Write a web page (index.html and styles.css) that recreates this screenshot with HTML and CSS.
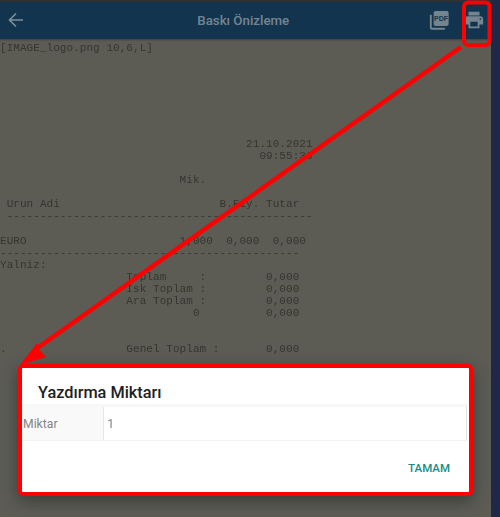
FILE: index.html
```html
<!DOCTYPE html>
<html lang="tr">
<head>
<meta charset="utf-8">
<title>Baskı Önizleme</title>
<link rel="stylesheet" href="styles.css">
</head>
<body>
<div class="screen">
  <main class="app">
    <header class="topbar">
      <svg class="back" viewBox="0 0 16 16" width="16" height="16"><path d="M15 8H2M8 1.500 1.500 8 8 14.500" fill="none" stroke="#7f8f99" stroke-width="1.6"/></svg>
      <h1 class="title">Baskı Önizleme</h1>
      <svg class="pdf" viewBox="0 0 24 24" width="22.500" height="22.500"><path d="M20 2H8c-1.100 0-2 .9-2 2v12c0 1.100.9 2 2 2h12c1.100 0 2-.9 2-2V4c0-1.100-.9-2-2-2zM4 6H2v14c0 1.100.9 2 2 2h14v-2H4V6z" fill="#75858f"/><text x="14" y="12.500" class="pdf-text" text-anchor="middle">PDF</text></svg>
      <svg class="print" viewBox="0 0 24 24" width="22" height="22"><path d="M19 8H5c-1.660 0-3 1.340-3 3v6h4v4h12v-4h4v-6c0-1.660-1.340-3-3-3zm-3 11H8v-5h8v5zm3-7c-.55 0-1-.45-1-1s.45-1 1-1 1 .45 1 1-.45 1-1 1zm-1-9H6v4h12V3z" fill="#75858f"/></svg>
    </header>
    <pre class="receipt">[IMAGE_logo.png 10,6,L]







                                     21.10.2021
                                       09:55:36

                           Mik.

 Urun Adi                        B.Fiy. Tutar
 ----------------------------------------------

EURO                       1,000  0,000  0,000
---------------------------------------------
Yalniz:
                   Toplam     :         0,000
                   Isk Toplam :         0,000
                   Ara Toplam :         0,000
                             0          0,000


.                  Genel Toplam :       0,000</pre>
  </main>
  <aside class="edge"></aside>
  <section class="dialog">
    <h2 class="dialog-title">Yazdırma Miktarı</h2>
    <div class="field">
      <span class="field-label">Miktar</span>
      <span class="field-value">1</span>
    </div>
    <div class="actions"><span class="ok">TAMAM</span></div>
  </section>
  <svg class="annotation" viewBox="0 0 500 517" width="500" height="517">
    <rect x="464" y="2.500" width="25.500" height="42.500" rx="4" fill="none" stroke="#fe0000" stroke-width="4"/>
    <path d="M461 47 36 349" fill="none" stroke="#fe0000" stroke-width="4.500"/>
    <path d="M20 365 37 343 39 349 46 357 Z" fill="#fe0000"/>
  </svg>
</div>
</body>
</html>
```
FILE: styles.css
```css
* { box-sizing: border-box; }
html, body { margin: 0; padding: 0; }
body { background: #5c5c55; font-family: Roboto, sans-serif; }
.screen { position: relative; display: flex; width: 500px; height: 517px; overflow: hidden; }
.app { flex: 0 0 491px; display: flex; flex-direction: column; background: #5c5c55; }
.edge { flex: 1; background: #1f2947; }
.topbar { display: flex; align-items: center; height: 39px; padding: 0 6px 1px 8px; background: #12344f; border-top: 2px solid #2f3133; box-shadow: 0 1px 2px rgba(0,0,0,.3); }
.back { flex: none; }
.title { flex: 1; margin: 0 0 0 35px; color: #75858f; font-size: 13.300px; font-weight: 500; text-align: center; }
.pdf { flex: none; margin-right: 13px; }
.pdf-text { fill: #12344f; font-family: "Liberation Sans", sans-serif; font-size: 7.500px; font-weight: 700; }
.print { flex: none; }
.receipt { margin: 0; padding-top: 2.500px; font-family: "Liberation Mono", monospace; font-size: 11px; letter-spacing: .05px; line-height: 12.060px; color: #36362f; filter: blur(.35px); }
.dialog { position: absolute; left: 18px; top: 364px; width: 455px; height: 132px; background: #fff; border: 4px solid #fe0000; border-radius: 5px; box-shadow: 0 5px 16px rgba(0,0,0,.35); }
.dialog-title { margin: 0; padding: 13px 0 0 16px; height: 36px; color: #212121; font-size: 16.300px; font-weight: 500; line-height: 24px; }
.field { display: flex; height: 37px; background: #fff; border-top: 3px solid #f7f7f7; border-bottom: 1px solid #f3f3f3; border-right: 1px solid #e3e3e3; margin-right: 2px; }
.field-label { flex: 0 0 82px; padding-left: 1px; background: #f9f9f9; border-right: 1px solid #e6e6e6; color: #858585; font-size: 12.200px; line-height: 34px; }
.field-value { padding-left: 3px; color: #858585; font-size: 13px; line-height: 34px; opacity: .99; }
.actions { display: flex; justify-content: flex-end; padding: 20px 19px 0 0; }
.ok { color: #158e84; font-size: 11.500px; font-weight: 500; line-height: 14px; }
.annotation { position: absolute; left: 0; top: 0; pointer-events: none; }
```
